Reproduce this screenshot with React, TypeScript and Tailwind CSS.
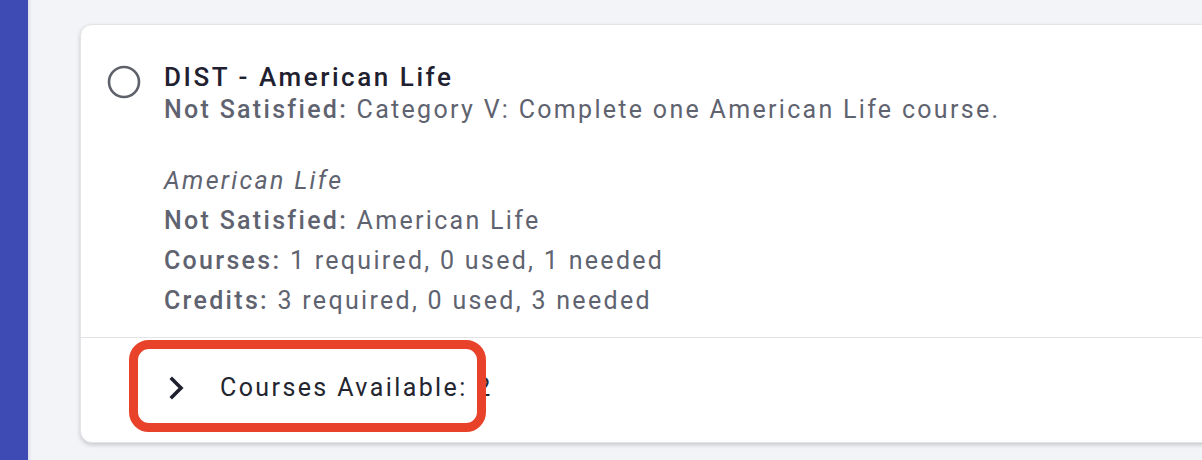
import React from "react";

export default function App() {
  return (
    <div className="w-[1202px] h-[460px] flex bg-[#f3f4f8] overflow-hidden" style={{ fontFamily: "Roboto, 'Liberation Sans', sans-serif" }}>
      <div className="w-[28px] shrink-0 bg-[#3f4bb4]" />
      <div className="w-[4px] shrink-0 bg-gradient-to-r from-[#dfe1ea] to-[#f3f4f8]" />
      <div className="flex-1 pl-[48px] pt-[24px]">
        <div className="relative w-[1200px] h-[419px] bg-white rounded-[12px] border border-[#e3e4e8] shadow-[0_2px_4px_rgba(0,0,0,0.18)] flex flex-col">
          <div className="flex pl-[26px] pt-[38px] h-[313px]">
            <svg width="36" height="36" viewBox="0 0 36 36" className="shrink-0 mt-[1px]">
              <circle cx="17" cy="18" r="15" fill="none" stroke="#5e606a" strokeWidth="2.6" />
            </svg>
            <div className="ml-[21px] flex flex-col whitespace-nowrap">
              <div className="text-[26px] leading-[28px] font-medium text-[#1f2130] tracking-[2.55px]">DIST - American Life</div>
              <div className="text-[25px] leading-[34px] text-[#5f6370] mt-[2px] tracking-[2.3px]">
                <span className="font-medium">Not Satisfied:</span> Category V: Complete one American Life course.
              </div>
              <div className="mt-[34px] text-[25px] leading-[40px] text-[#5f6370] tracking-[2.3px]">
                <div className="italic">American Life</div>
                <div><span className="font-medium">Not Satisfied:</span> American Life</div>
                <div><span className="font-medium">Courses:</span> 1 required, 0 used, 1 needed</div>
                <div><span className="font-medium">Credits:</span> 3 required, 0 used, 3 needed</div>
              </div>
            </div>
          </div>
          <div className="h-px bg-[#e2e3e6]" />
          <div className="flex items-center h-[104px] pl-[86px] pb-[4px]">
            <svg width="20" height="26" viewBox="0 0 20 26" className="shrink-0">
              <path d="M5 4 L14 13 L5 22" fill="none" stroke="#1f2130" strokeWidth="3.6" strokeLinecap="square" />
            </svg>
            <span className="ml-[33px] text-[25px] text-[#23252f] tracking-[2.4px] whitespace-nowrap">Courses Available: 2</span>
          </div>
          <div className="absolute left-[48px] top-[315px] w-[357px] h-[92px] rounded-[20px] border-[9px] border-[#e8432a]" />
        </div>
      </div>
    </div>
  );
}
